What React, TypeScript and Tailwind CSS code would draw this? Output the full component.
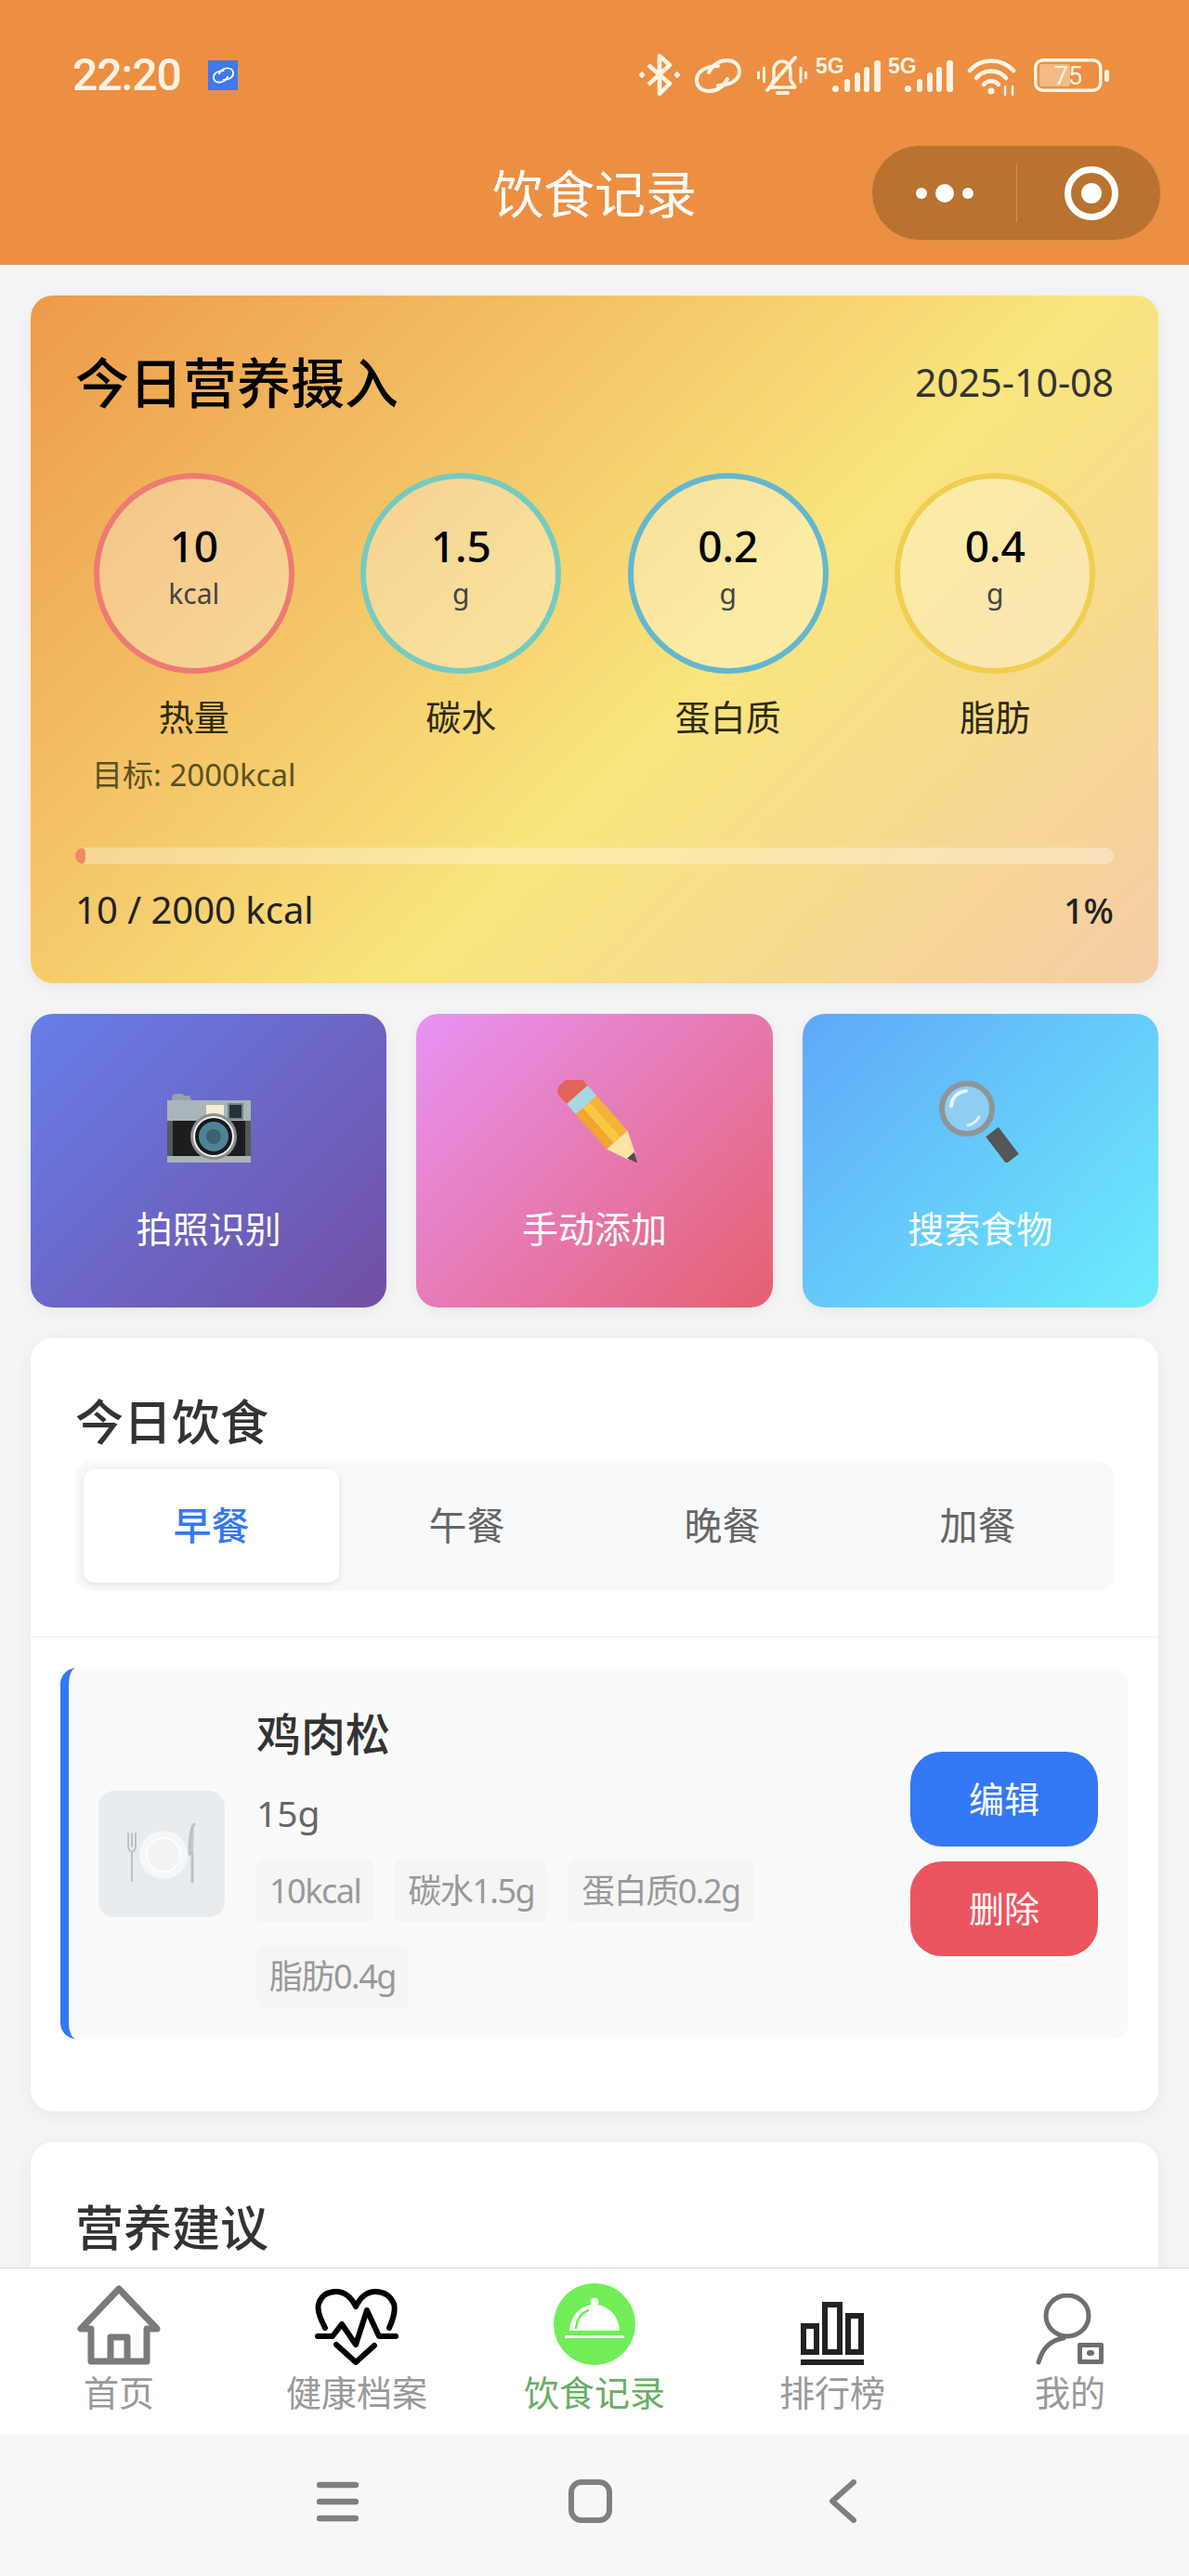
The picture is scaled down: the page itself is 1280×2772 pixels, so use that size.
import type React from "react"

const ICON = "#FFF3E4"

function LinkIcon({ className, color }: { className: string; color: string }) {
  return (
    <svg className={className} viewBox="0 0 50 37" fill="none" stroke={color} strokeWidth="4" strokeLinecap="round">
      <path d="M25 8C12 8 2 14 2 23C2 31 8 35 15 35C24 35 31 30 35 22" />
      <path d="M25 29C38 29 48 23 48 14C48 6 42 2 35 2C26 2 19 7 15 15" />
    </svg>
  )
}

function Bluetooth() {
  return (
    <svg className="w-[44px] h-[45px]" viewBox="0 0 44 45" fill="none" stroke={ICON} strokeWidth="4.5" strokeLinejoin="round">
      <path d="M10 12L33 32L22 43V2L33 12L10 33" />
      <path d="M3 19L6 22.5L3 26L0 22.5Z M41 19L44 22.5L41 26L38 22.5Z" fill={ICON} strokeWidth="1" />
    </svg>
  )
}

function MutedBell() {
  return (
    <svg className="w-[54px] h-[43px]" viewBox="0 0 54 43" fill="none" stroke={ICON} strokeWidth="3.5" strokeLinecap="round" strokeLinejoin="round">
      <path d="M14 34H41L36 26V16C36 10 32 6 27 6C22 6 18 10 18 16V26Z" />
      <path d="M11 37L41 2" strokeWidth="4" />
      <path d="M22 40H33" strokeWidth="4" />
      <path d="M1.5 18V24M7.5 13V28M47 13V28M52.5 18V24" strokeWidth="3" />
    </svg>
  )
}

function Signal() {
  return (
    <svg className="w-[70px] h-[46px] -mt-[8px]" viewBox="0 -8 70 46" fill={ICON}>
      <text x="0" y="18" fontSize="23" fontWeight="700" fontFamily="'Liberation Sans', sans-serif">5G</text>
      <rect x="18" y="31" width="7" height="7" rx="3.5" />
      <rect x="31" y="24" width="6" height="14" rx="3" />
      <rect x="42" y="17" width="6" height="21" rx="3" />
      <rect x="52" y="11" width="6" height="27" rx="3" />
      <rect x="63" y="4" width="7" height="34" rx="3" />
    </svg>
  )
}

function Wifi() {
  return (
    <svg className="w-[53px] h-[41px]" viewBox="0 0 53 41" fill="none" stroke={ICON} strokeWidth="4.5" strokeLinecap="round">
      <path d="M3 14C15 0 37 0 50 14" />
      <path d="M10 22C18 12 34 12 42 22" />
      <path d="M18 29C22 24 30 24 34 29" />
      <circle cx="26" cy="36" r="3.5" fill={ICON} stroke="none" />
      <path d="M41 31V40M49 31V40" strokeWidth="2.5" />
    </svg>
  )
}

function Battery() {
  return (
    <svg className="w-[81px] h-[36px]" viewBox="0 0 81 36">
      <rect x="6" y="6" width="33" height="24" rx="2" fill="#F3BB85" />
      <rect x="1.75" y="1.75" width="70" height="32.5" rx="8" fill="none" stroke={ICON} strokeWidth="3.5" />
      <rect x="76" y="12" width="5" height="13" rx="2.5" fill={ICON} />
      <text x="37" y="28" textAnchor="middle" fontSize="27" fill={ICON} fontFamily="Roboto, sans-serif">75</text>
    </svg>
  )
}

function StatusBar() {
  return (
    <div className="h-[156px] flex items-start pt-[58px] pl-[78px] pr-[86px]">
      <span className="font-[Roboto,sans-serif] text-[48px] leading-[46px] font-medium text-[#FFF3E4] w-[146px] -tracking-[1px]">22:20</span>
      <div className="mt-[7px] w-[32px] h-[32px] bg-[#3F78F0] flex items-center justify-center">
        <LinkIcon className="w-[23px] h-[18px]" color="#ffffff" />
      </div>
      <div className="ml-auto flex items-start">
        <Bluetooth />
        <div className="ml-[16px] mt-[5px]"><LinkIcon className="w-[50px] h-[37px]" color={ICON} /></div>
        <div className="ml-[17px] mt-[2px]"><MutedBell /></div>
        <div className="ml-[9px] mt-[3px]"><Signal /></div>
        <div className="ml-[8px] mt-[3px]"><Signal /></div>
        <div className="ml-[15px] mt-[4px]"><Wifi /></div>
        <div className="ml-[19px] mt-[5px]"><Battery /></div>
      </div>
    </div>
  )
}

function NavBar() {
  return (
    <div className="grid grid-cols-[1fr_auto_1fr] items-start pr-[30px]">
      <div />
      <span className="text-[55px] leading-[103px] text-white ml-[30px]">饮食记录</span>
      <div className="justify-self-end w-[312px] h-[103px] rounded-full bg-[#B9722F] border border-[#D8914A] flex items-center">
        <div className="w-[155px] flex items-center justify-center gap-[9px]">
          <div className="w-[12px] h-[12px] rounded-full bg-white" />
          <div className="w-[20px] h-[20px] rounded-full bg-white" />
          <div className="w-[12px] h-[12px] rounded-full bg-white" />
        </div>
        <div className="w-px h-[63px] bg-[#D8914A]" />
        <div className="flex-1 flex justify-center pl-[6px]">
          <div className="w-[58px] h-[58px] rounded-full border-[7px] border-white flex items-center justify-center">
            <div className="w-[22px] h-[22px] rounded-full bg-white" />
          </div>
        </div>
      </div>
    </div>
  )
}

const NUTRIENTS = [
  { value: "10", unit: "kcal", label: "热量", ring: "border-[#EE7A74]", target: "目标: 2000kcal" },
  { value: "1.5", unit: "g", label: "碳水", ring: "border-[#75CBC0]" },
  { value: "0.2", unit: "g", label: "蛋白质", ring: "border-[#63B7CF]" },
  { value: "0.4", unit: "g", label: "脂肪", ring: "border-[#EFCE50]" },
]

function SummaryCard() {
  return (
    <section className="shrink-0 rounded-[24px] h-[740px] px-[48px] pt-[48px] bg-[linear-gradient(135deg,#ED9A4A_0%,#F9E57D_58%,#F5CDA6_100%)] shadow-[0_4px_20px_rgba(0,0,0,0.06)]">
      <div className="flex items-center justify-between h-[92px]">
        <h1 className="text-[58px] leading-[92px] font-medium text-black">今日营养摄入</h1>
        <span className="text-[41px] text-[#333333]">2025-10-08</span>
      </div>
      <div className="grid grid-cols-4 -mx-[16px] mt-[51px] h-[346px]">
        {NUTRIENTS.map((n) => (
          <div key={n.label} className="flex flex-col items-center">
            <div className={`w-[216px] h-[216px] rounded-full border-[6px] bg-white/30 flex flex-col items-center pt-[44px] ${n.ring}`}>
              <span className="text-[46px] leading-[56px] font-medium text-black">{n.value}</span>
              <span className="mt-[4px] text-[30px] leading-[40px] text-[#444444]">{n.unit}</span>
            </div>
            <span className="mt-[21px] text-[38px] leading-[50px] text-[#2E2A10]">{n.label}</span>
            <span className="mt-[18px] text-[33px] leading-[40px] text-[#5C5020]">{n.target}</span>
          </div>
        ))}
      </div>
      <div className="mt-[57px] h-[18px] rounded-full bg-white/30 overflow-hidden">
        <div className="h-full w-[11px] rounded-full bg-[#EE8A66]" />
      </div>
      <div className="mt-[22px] flex items-center justify-between text-[40px] leading-[54px] text-[#222222]">
        <span>10 / 2000 kcal</span>
        <span className="text-[38px] font-medium">1%</span>
      </div>
    </section>
  )
}

function Camera() {
  return (
    <svg className="w-[90px] h-[74px]" viewBox="0 0 90 74">
      <path d="M5 9V3C5 1 7 0 9 0H16L18 2H24L27 9Z" fill="#93A3AE" />
      <rect x="0" y="7" width="90" height="24" fill="#AAB5BB" />
      <rect x="42" y="12" width="19" height="14" fill="#F6EDD2" />
      <rect x="66" y="11" width="15" height="16" fill="#263238" stroke="#78848C" strokeWidth="2" />
      <rect x="0" y="29" width="90" height="39" fill="#1D1D1D" />
      <rect x="0" y="29" width="6" height="39" fill="#55595C" />
      <rect x="84" y="29" width="6" height="39" fill="#55595C" />
      <rect x="0" y="67" width="90" height="7" fill="#A9B4BA" />
      <circle cx="50" cy="46" r="25" fill="#8A8E90" />
      <circle cx="50" cy="46" r="22" fill="#F2F2F2" />
      <circle cx="50" cy="46" r="20" fill="#17191B" />
      <circle cx="50" cy="46" r="16" fill="#4F8297" />
      <circle cx="50" cy="46" r="8" fill="#3A6273" />
    </svg>
  )
}

function Pencil() {
  return (
    <svg className="w-[92px] h-[89px]" viewBox="0 0 92 89">
      <g transform="translate(14 1) rotate(-41.5)">
        <rect x="-15" y="0" width="30" height="26" rx="8" fill="#E5625A" />
        <rect x="-15" y="20" width="30" height="15" fill="#A8D8E2" />
        <rect x="-15" y="35" width="10" height="50" fill="#F1A62C" />
        <rect x="-5" y="35" width="10" height="50" fill="#F8C93F" />
        <rect x="5" y="35" width="10" height="50" fill="#F3B533" />
        <path d="M-15 85H15L5 109H-5Z" fill="#FBE3A6" />
        <path d="M-5 107H5L0 118Z" fill="#4E4E50" />
      </g>
    </svg>
  )
}

function Magnifier() {
  return (
    <svg className="w-[90px] h-[89px]" viewBox="0 0 90 89">
      <path d="M58 56L80 85" stroke="#565656" strokeWidth="17" />
      <circle cx="31" cy="31" r="27" fill="#90CDF3" stroke="#8F9498" strokeWidth="6" />
      <path d="M14 28C15 19 21 13 30 12" fill="none" stroke="#E6F6FF" strokeWidth="4" strokeLinecap="round" />
      <path d="M44 40C41 45 37 48 32 49" fill="none" stroke="#DDF1FC" strokeWidth="3" strokeLinecap="round" />
    </svg>
  )
}

const ACTIONS = [
  { label: "拍照识别", icon: <Camera />, bg: "bg-[linear-gradient(135deg,#667EEA,#714FA3)]" },
  { label: "手动添加", icon: <Pencil />, bg: "bg-[linear-gradient(135deg,#E893F5,#E5606F)]" },
  { label: "搜索食物", icon: <Magnifier />, bg: "bg-[linear-gradient(135deg,#5FA8F8,#6CEDFC)]" },
]

function QuickActions() {
  return (
    <div className="shrink-0 grid grid-cols-3 gap-[32px] h-[316px]">
      {ACTIONS.map((a) => (
        <div key={a.label} className={`rounded-[24px] flex flex-col items-center shadow-[0_4px_20px_rgba(0,0,0,0.06)] ${a.bg}`}>
          <div className="h-[89px] mt-[71px] flex items-end">{a.icon}</div>
          <span className="mt-[46px] text-[39px] leading-[50px] text-white">{a.label}</span>
        </div>
      ))}
    </div>
  )
}

function Plate() {
  return (
    <svg className="w-[136px] h-[136px]" viewBox="0 0 136 136">
      <circle cx="70" cy="69" r="26" fill="#F6F7F8" />
      <circle cx="70" cy="69" r="18" fill="#F1F3F4" stroke="#FFFFFF" strokeWidth="1.5" />
      <path d="M32 46V60C32 64 34 65 36 66V97M36 46V60M40 46V60C40 64 38 65 36 66" fill="none" stroke="#BDC1C5" strokeWidth="2" strokeLinecap="round" />
      <path d="M103 36C99 40 98 54 98 68H101V98" fill="#C3C7CA" stroke="#BDC1C5" strokeWidth="3" strokeLinecap="round" />
    </svg>
  )
}

const MEALS = ["早餐", "午餐", "晚餐", "加餐"]
const CHIPS = ["10kcal", "碳水1.5g", "蛋白质0.2g", "脂肪0.4g"]

function DietCard() {
  return (
    <section className="shrink-0 rounded-[24px] bg-white h-[832px] shadow-[0_4px_20px_rgba(0,0,0,0.06)]">
      <div className="px-[48px] pt-[56px]">
        <h2 className="text-[52px] leading-[68px] font-medium text-[#333333]">今日饮食</h2>
        <div className="mt-[8px] h-[140px] rounded-[17px] bg-[#F8F9FA] p-[9px] grid grid-cols-4">
          {MEALS.map((m, i) => (
            <div
              key={m}
              className={
                i === 0
                  ? "rounded-[12px] bg-white shadow-[0_2px_8px_rgba(0,0,0,0.1)] flex items-center justify-center text-[41px] font-medium text-[#3478F6]"
                  : "flex items-center justify-center text-[41px] text-[#666666]"
              }
            >
              {m}
            </div>
          ))}
        </div>
      </div>
      <div className="mt-[49px] h-px bg-[#EEEEEE]" />
      <div className="mt-[33px] mx-[32px] h-[399px] rounded-[17px] bg-[#FAFAFA] border-l-[9px] border-[#3478F6] pl-[32px] pr-[33px] flex items-center">
        <div className="w-[136px] h-[136px] shrink-0 rounded-[17px] bg-[#E9ECEF]">
          <Plate />
        </div>
        <div className="ml-[34px] flex-1">
          <div className="text-[48px] leading-[76px] font-medium text-[#333333]">鸡肉松</div>
          <div className="mt-[17px] text-[39px] leading-[60px] text-[#666666]">15g</div>
          <div className="mt-[20px] flex flex-wrap gap-x-[23px] gap-y-[24px] pr-[20px]">
            {CHIPS.map((c) => (
              <span key={c} className="h-[68px] px-[14px] rounded-[7px] bg-[#F5F5F5] text-[36px] leading-[68px] -tracking-[1.5px] text-[#999999]">
                {c}
              </span>
            ))}
          </div>
        </div>
        <div className="w-[202px] shrink-0 flex flex-col gap-[16px] text-[38px] text-white">
          <div className="h-[102px] rounded-[34px] bg-[#3478F6] flex items-center justify-center">编辑</div>
          <div className="h-[102px] rounded-[34px] bg-[#EC5560] flex items-center justify-center">删除</div>
        </div>
      </div>
    </section>
  )
}

function HomeIcon() {
  return (
    <svg className="w-[90px] h-[86px]" viewBox="0 0 90 86" fill="none" stroke="#7A7A7A" strokeWidth="7" strokeLinejoin="round">
      <path d="M45 4L4 47H15V82H75V47H86Z" />
      <path d="M36 82V56H54V82" />
    </svg>
  )
}

function HealthIcon() {
  return (
    <svg className="w-[90px] h-[82px]" viewBox="0 0 90 82" fill="none" stroke="#000000" strokeWidth="6" strokeLinecap="round" strokeLinejoin="round">
      <path d="M11 42C5 31 2 23 4 16C7 7 14 3 23 3C32 3 39 9 44 19C49 9 56 3 65 3C74 3 81 7 85 16C87 23 85 31 80 42" />
      <path d="M3 51H19L29 38L44 60L56 23L69 51H87" />
      <path d="M23 60L44 79L64 61" />
    </svg>
  )
}

function DietIcon() {
  return (
    <svg className="w-[88px] h-[88px]" viewBox="0 0 88 88">
      <circle cx="44" cy="44" r="44" fill="#71EE57" />
      <circle cx="44" cy="20" r="4.5" fill="#FFFFFF" />
      <path d="M17 51C18 35 29 23 44 23C59 23 70 35 71 51Z" fill="#FFFFFF" />
      <path d="M24 48C25 39 30 32 37 29" fill="none" stroke="#71EE57" strokeWidth="2.5" strokeLinecap="round" />
      <rect x="12" y="56" width="64" height="3" rx="1.5" fill="#FFFFFF" />
    </svg>
  )
}

function RankIcon() {
  return (
    <svg className="w-[68px] h-[68px]" viewBox="0 0 68 68" fill="none" stroke="#222222" strokeWidth="6">
      <rect x="3" y="26" width="14" height="28" />
      <rect x="26" y="3" width="16" height="51" />
      <rect x="51" y="15" width="14" height="39" />
      <rect x="0" y="62" width="68" height="6" fill="#222222" stroke="none" />
    </svg>
  )
}

function MeIcon() {
  return (
    <svg className="w-[74px] h-[77px]" viewBox="0 0 74 77" fill="none" stroke="#6F6F6F" strokeWidth="5" strokeLinecap="round">
      <ellipse cx="34" cy="24" rx="23" ry="22" />
      <path d="M30 48C16 50 7 60 3 74" />
      <rect x="45" y="53" width="28" height="23" rx="2" fill="#6F6F6F" stroke="none" />
      <rect x="50" y="58" width="18" height="13" fill="#FFFFFF" stroke="none" />
      <rect x="55" y="61" width="8" height="6" rx="3" fill="#6F6F6F" stroke="none" />
    </svg>
  )
}

const TABS: { label: string; icon: React.ReactNode; active?: boolean }[] = [
  { label: "首页", icon: <HomeIcon /> },
  { label: "健康档案", icon: <HealthIcon /> },
  { label: "饮食记录", icon: <DietIcon />, active: true },
  { label: "排行榜", icon: <RankIcon /> },
  { label: "我的", icon: <MeIcon /> },
]

function TabBar() {
  return (
    <nav className="h-[180px] shrink-0 bg-white border-t border-[#D5D5D5] grid grid-cols-5">
      {TABS.map((t) => (
        <div key={t.label} className="flex flex-col items-center">
          <div className="h-[104px] flex items-end justify-center">{t.icon}</div>
          <span className={`mt-[5px] text-[38px] leading-[48px] ${t.active ? "text-[#66AE62]" : "text-[#999999]"}`}>{t.label}</span>
        </div>
      ))}
    </nav>
  )
}

function SystemNav() {
  return (
    <div className="h-[152px] shrink-0 bg-[#F7F7F7] flex items-start pt-[48px] pl-[341px]">
      <svg className="w-[45px] h-[47px] mt-[2px]" viewBox="0 0 45 47" fill="none" stroke="#7F7F7F" strokeWidth="6.5" strokeLinecap="round">
        <path d="M3 4H42M3 22H42M3 40H42" />
      </svg>
      <svg className="w-[47px] h-[47px] ml-[226px]" viewBox="0 0 47 47" fill="none" stroke="#7F7F7F" strokeWidth="6">
        <rect x="3" y="3" width="41" height="41" rx="11" />
      </svg>
      <svg className="w-[29px] h-[47px] ml-[234px]" viewBox="0 0 29 47" fill="none" stroke="#7F7F7F" strokeWidth="6" strokeLinecap="round" strokeLinejoin="round">
        <path d="M26 3L3 23.5L26 44" />
      </svg>
    </div>
  )
}

export default function App() {
  return (
    <div className="w-[1280px] h-[2772px] flex flex-col overflow-hidden bg-[#F5F5F5] font-['Noto_Sans','Noto_Sans_CJK_SC',sans-serif]">
      <header className="h-[285px] shrink-0 bg-[#EC8F42]">
        <StatusBar />
        <NavBar />
      </header>
      <main className="flex-1 min-h-0 overflow-hidden px-[33px] pt-[33px] flex flex-col gap-[33px]">
        <SummaryCard />
        <QuickActions />
        <DietCard />
        <section className="shrink-0 rounded-[24px] bg-white h-[300px] px-[48px] pt-[58px] shadow-[0_4px_20px_rgba(0,0,0,0.06)]">
          <h2 className="text-[52px] leading-[68px] font-medium text-[#333333]">营养建议</h2>
        </section>
      </main>
      <TabBar />
      <SystemNav />
    </div>
  )
}
